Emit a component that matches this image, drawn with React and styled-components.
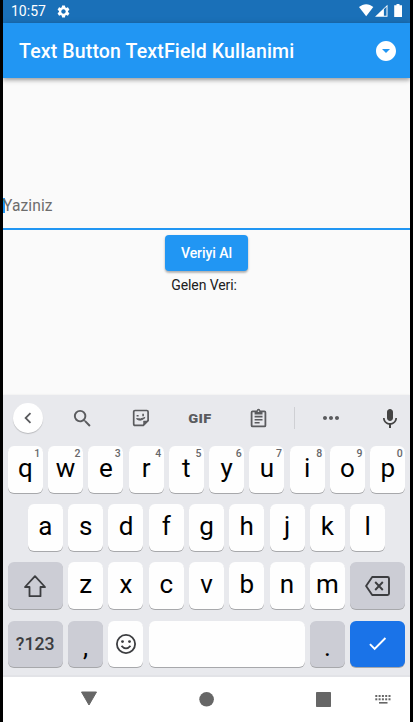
import React from 'react';
import styled, { createGlobalStyle } from 'styled-components';
import {
  MdSettings,
  MdSearch,
  MdKeyboardVoice,
  MdMoreHoriz,
  MdArrowDropDownCircle,
  MdChevronLeft,
  MdCheck,
} from 'react-icons/md';

const GlobalStyle = createGlobalStyle`
  * { box-sizing: border-box; }
  body {
    margin: 0;
    background: #000;
    font-family: Roboto, "Liberation Sans", sans-serif;
    overflow: hidden;
  }
  svg { display: block; flex: none; }
`;

const Phone = styled.div`
  width: 407px;
  height: 722px;
  margin-left: 3px;
  display: flex;
  flex-direction: column;
  background: #fafafa;
  overflow: hidden;
`;

const StatusBar = styled.div`
  height: 23px;
  flex: none;
  background: #1a70b8;
  color: #fff;
  display: flex;
  align-items: center;
  padding: 0 7px 0 8px;
`;

const Clock = styled.span`
  font-size: 14px;
  line-height: 23px;
  width: 45px;
`;

const StatusIcons = styled.div`
  margin-left: auto;
  display: flex;
`;

const AppBar = styled.header`
  height: 55px;
  flex: none;
  background: #2196f3;
  color: #fff;
  display: flex;
  align-items: center;
  justify-content: space-between;
  padding: 0 12px 0 16px;
  box-shadow: 0 2px 4px rgba(0, 0, 0, 0.3), 0 1px 7px rgba(0, 0, 0, 0.14);
`;

const Title = styled.h1`
  margin: 0;
  padding-top: 2px;
  font-size: 19.5px;
  font-weight: 500;
  line-height: 24px;
  white-space: nowrap;
  letter-spacing: 0.15px;
`;

const Body = styled.main`
  height: 317px;
  flex: none;
  padding-top: 105px;
  display: flex;
  flex-direction: column;
  align-items: center;
`;

const Field = styled.div`
  width: 100%;
  height: 47px;
  border-bottom: 2px solid #2196f3;
  display: flex;
  align-items: center;
`;

const Caret = styled.i`
  width: 2px;
  height: 15px;
  margin: 0 -2px 0 0;
  background: #2196f3;
`;

const Hint = styled.span`
  font-size: 15.6px;
  line-height: 20px;
  color: #6d6d6d;
  letter-spacing: 0.1px;
`;

const RaisedButton = styled.button`
  margin: 5px 0 0;
  width: 83px;
  height: 36px;
  padding: 0;
  border: 0;
  border-radius: 4px;
  background: #2196f3;
  color: #fff;
  font: 500 14px/36px Roboto, sans-serif;
  letter-spacing: -0.05px;
  box-shadow: 0 2px 2px rgba(0, 0, 0, 0.2), 0 1px 3px rgba(0, 0, 0, 0.16);
`;

const Result = styled.p`
  margin: 5px 5px 0 0;
  font-size: 14px;
  line-height: 18px;
  color: #202020;
  letter-spacing: -0.1px;
`;

const Keyboard = styled.section`
  height: 282px;
  flex: none;
  background: #e8e9ed;
  border-bottom: 2px solid #e2e3e7;
  box-shadow: 0 0 2px rgba(0, 0, 0, 0.08);
`;

const Toolbar = styled.div`
  height: 51px;
  padding: 0 8px 5px 10px;
  display: flex;
  align-items: center;
  color: #5a5b5e;
`;

const Tool = styled.div`
  width: ${(p) => p.$w}px;
  flex: none;
  display: flex;
  justify-content: center;
  margin-left: ${(p) => (p.$end ? 'auto' : 0)};
`;

const BackCircle = styled.div`
  width: 30px;
  height: 30px;
  flex: none;
  border-radius: 50%;
  background: #fff;
  display: flex;
  align-items: center;
  justify-content: center;
  box-shadow: 0 1px 1px rgba(0, 0, 0, 0.2);
`;

const GifLabel = styled.span`
  font-size: 13.5px;
  font-weight: 900;
  line-height: 14px;
  letter-spacing: 0.3px;
  transform: scaleX(1.08);
`;

const Divider = styled.i`
  width: 1px;
  height: 22px;
  background: #cfd0d4;
`;

const Rows = styled.div`
  display: flex;
  flex-direction: column;
  gap: 11.6px;
`;

const KeyRow = styled.div`
  display: flex;
  justify-content: center;
  gap: 5.27px;
`;

const tones = { light: '#fefefe', gray: '#cccdd5', blue: '#1a73e8' };

const Key = styled.div`
  position: relative;
  width: ${(p) => p.$w || 35}px;
  height: 46.6px;
  flex: none;
  border-radius: 6px;
  background: ${(p) => tones[p.$tone || 'light']};
  color: ${(p) => (p.$tone === 'blue' ? '#fff' : '#3c3d40')};
  box-shadow: 0 1px 0.5px rgba(0, 0, 0, 0.28);
  display: flex;
  align-items: center;
  justify-content: center;
`;

const Letter = styled.span`
  font-size: 26px;
  line-height: 30px;
  color: #000;
  padding-bottom: ${(p) => (p.$low ? 0 : 2.4)}px;
  padding-top: ${(p) => (p.$low ? 6 : 0)}px;
`;

const Digit = styled.sup`
  position: absolute;
  top: 2px;
  right: 2.5px;
  font-size: 10.5px;
  font-weight: 500;
  line-height: 12px;
  color: #66676a;
`;

const Mode = styled.span`
  font-size: 17.7px;
  font-weight: 500;
`;

const NavBar = styled.nav`
  flex: 1;
  background: #fff;
  display: flex;
  color: #666;
  padding: 13px 0 0 77px;
`;

const NavItem = styled.div`
  width: 18px;
  margin-right: ${(p) => p.$gap || 0}px;
`;

const Wifi = () => (
  <svg width="16" height="23" viewBox="0 0 16 23" fill="#fff">
    <path d="M0 7.1C4.2 3.2 10.2 3.2 14.3 7.1L7.2 16.2z" />
  </svg>
);
const Signal = () => (
  <svg width="14" height="23" viewBox="0 0 14 23">
    <path d="M12.5 4.8V16.7H0z" fill="#fff" />
    <path d="M8.9 9.2L11.5 6.8V15.8H8.9z" fill="#1a70b8" />
  </svg>
);
const Battery = () => (
  <svg width="14" height="23" viewBox="0 0 14 23" fill="#fff">
    <path d="M7.5 4h3v1.3H13V17H5.2V5.3h2.3z" />
  </svg>
);
const Sticker = () => (
  <svg width="18" height="18" viewBox="0 0 18 18" fill="none" stroke="currentColor" strokeWidth="1.7">
    <path d="M3 1.5h11.8q1.3 0 1.3 1.3v8.8l-4.8 4.8H3q-1.3 0-1.3-1.3V2.8Q1.7 1.5 3 1.5z" />
    <path d="M11.5 16v-4h4.5z" fill="currentColor" strokeWidth=".5" />
    <path d="M4.5 9.7q4 3.4 8.6-1.2L8.5 9.9z" fill="currentColor" strokeWidth="1" />
    <path d="M4.6 6.8h2M11.1 4.7v2.5" strokeWidth="1.6" />
  </svg>
);
const Clipboard = () => (
  <svg width="18" height="20" viewBox="0 0 18 20" fill="none" stroke="currentColor">
    <rect x="1.6" y="3.4" width="13.8" height="15" rx="1" strokeWidth="1.8" />
    <path d="M4.6 6.5V3h2q.3-2.2 1.9-2.2T10.5 3h2v3.5z" fill="currentColor" stroke="none" />
    <path d="M4.6 8.6h7.9M4.6 11.7h7.9M4.6 14.7h5" strokeWidth="1.6" />
    <circle cx="8.5" cy="3.2" r=".8" fill="#e8e9ed" stroke="none" />
  </svg>
);
const Shift = () => (
  <svg width="24" height="24" viewBox="0 0 24 24" fill="none" stroke="currentColor" strokeWidth="1.8" strokeLinejoin="round">
    <path d="M12 2.2L22 13h-4.500v9.2h-11V13H2z" />
  </svg>
);
const Backspace = () => (
  <svg width="26" height="22" viewBox="0 0 26 22" fill="none" stroke="currentColor" strokeWidth="1.9" strokeLinejoin="round">
    <path d="M7.2 2H22.5q1.500 0 1.500 1.500v15q0 1.500-1.500 1.500H7.2L1.1 11z" />
    <path d="M10.2 7l7.600 8M17.800 7l-7.600 8" />
  </svg>
);
const Smile = () => (
  <svg width="22" height="22" viewBox="0 0 22 22" fill="none" stroke="currentColor" strokeWidth="1.8">
    <circle cx="11" cy="11" r="9.1" />
    <path d="M6.5 12.8q4.500 5 9 0" />
    <circle cx="7.5" cy="8.6" r="1.4" fill="currentColor" stroke="none" />
    <circle cx="14.5" cy="8.6" r="1.4" fill="currentColor" stroke="none" />
  </svg>
);
const KeyboardGlyph = () => (
  <svg width="16" height="18" viewBox="0 0 16 18" fill="#666">
    {[5, 8.3].map((y) =>
      [0.3, 3.6, 6.9, 10.2, 13.5].map((x) => (
        <rect key={`${x}-${y}`} x={x} y={y} width="2" height="2" />
      )),
    )}
    <rect x="4" y="12" width="8.5" height="1.6" />
  </svg>
);

export default function App() {
  return (
    <>
      <GlobalStyle />
      <Phone>
        <StatusBar>
          <Clock>10:57</Clock>
          <MdSettings size={15} />
          <StatusIcons>
            <Wifi />
            <Signal />
            <Battery />
          </StatusIcons>
        </StatusBar>
        <AppBar>
          <Title>Text Button TextField Kullanimi</Title>
          <MdArrowDropDownCircle size={24} />
        </AppBar>
        <Body>
          <Field>
            <Caret />
            <Hint>Yaziniz</Hint>
          </Field>
          <RaisedButton>Veriyi Al</RaisedButton>
          <Result>Gelen Veri:</Result>
        </Body>
        <Keyboard>
          <Toolbar>
            <BackCircle><MdChevronLeft size={22} /></BackCircle>
            <Tool $w={79}><MdSearch size={23} /></Tool>
            <Tool $w={38}><Sticker /></Tool>
            <Tool $w={79}><GifLabel>GIF</GifLabel></Tool>
            <Tool $w={39}><Clipboard /></Tool>
            <Tool $w={33}><Divider /></Tool>
            <Tool $w={40}><MdMoreHoriz size={24} /></Tool>
            <Tool $w={24} $end><MdKeyboardVoice size={24} color="#444" /></Tool>
          </Toolbar>
          <Rows>
            <KeyRow>
              {[...'qwertyuiop'].map((c, i) => (
                <Key key={c}>
                  <Letter>{c}</Letter>
                  <Digit>{(i + 1) % 10}</Digit>
                </Key>
              ))}
            </KeyRow>
            <KeyRow>
              {[...'asdfghjkl'].map((c) => (
                <Key key={c}><Letter>{c}</Letter></Key>
              ))}
            </KeyRow>
            <KeyRow>
              <Key $w={55.1} $tone="gray"><Shift /></Key>
              {[...'zxcvbnm'].map((c) => (
                <Key key={c}><Letter>{c}</Letter></Key>
              ))}
              <Key $w={55.1} $tone="gray"><Backspace /></Key>
            </KeyRow>
            <KeyRow>
              <Key $w={55.1} $tone="gray"><Mode>?123</Mode></Key>
              <Key $tone="gray"><Letter $low>,</Letter></Key>
              <Key><Smile /></Key>
              <Key $w={156.1} />
              <Key $tone="gray"><Letter $low>.</Letter></Key>
              <Key $w={55.1} $tone="blue"><MdCheck size={23} /></Key>
            </KeyRow>
          </Rows>
        </Keyboard>
        <NavBar>
          <NavItem $gap={99.5}>
            <svg width="18" height="18" viewBox="0 0 18 18" fill="currentColor">
              <path d="M1.5 2h15L9 15z" stroke="currentColor" strokeLinejoin="round" />
            </svg>
          </NavItem>
          <NavItem $gap={99}>
            <svg width="18" height="18" viewBox="0 0 18 18" fill="currentColor"><circle cx="8.6" cy="9.3" r="7.3" /></svg>
          </NavItem>
          <NavItem $gap={42.5}>
            <svg width="18" height="18" viewBox="0 0 18 18" fill="currentColor"><rect x="1" y="2" width="15" height="15" rx=".7" /></svg>
          </NavItem>
          <NavItem><KeyboardGlyph /></NavItem>
        </NavBar>
      </Phone>
    </>
  );
}
